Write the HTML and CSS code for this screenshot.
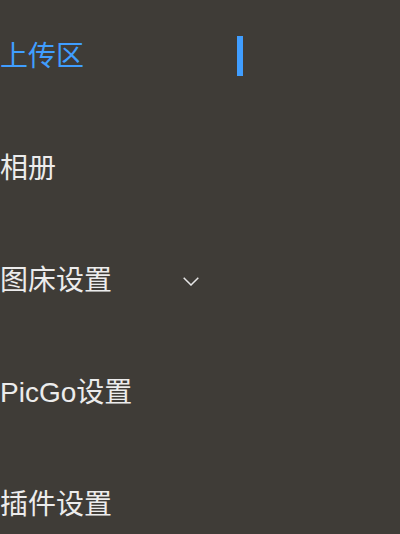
FILE: index.html
```html
<!DOCTYPE html>
<html lang="zh">
<head>
<meta charset="utf-8">
<link rel="stylesheet" href="styles.css">
</head>
<body>
<nav class="menu">
  <div class="item active"><span class="label">上传区</span><span class="bar"></span></div>
  <div class="item"><span class="label">相册</span></div>
  <div class="item sub"><span class="label">图床设置</span>
    <svg class="arrow" width="16" height="9" viewBox="0 0 16 9"><path d="M0.7 0.7 L8 8 L15.3 0.7" fill="none" stroke="#e6e6e6" stroke-width="1.5"/></svg>
  </div>
  <div class="item"><span class="label">PicGo设置</span></div>
  <div class="item"><span class="label">插件设置</span></div>
</nav>
</body>
</html>
```
FILE: styles.css
```css
html, body {
  margin: 0;
  padding: 0;
  background: #3f3c37;
  height: 100%;
  overflow: hidden;
}
.menu {
  width: 243px;
  display: flex;
  flex-direction: column;
  font-family: "Liberation Sans", "Noto Sans CJK SC", sans-serif;
}
.item {
  height: 112px;
  display: flex;
  align-items: center;
  font-size: 28px;
  color: #ececec;
}
.label {
  margin-bottom: 4px;
}
.item.active {
  color: #409eff;
  justify-content: space-between;
}
.bar {
  width: 6px;
  height: 40px;
  background: #409eff;
}
.sub {
  width: 199px;
  justify-content: space-between;
}
.arrow {
  margin-top: 2px;
}
```
